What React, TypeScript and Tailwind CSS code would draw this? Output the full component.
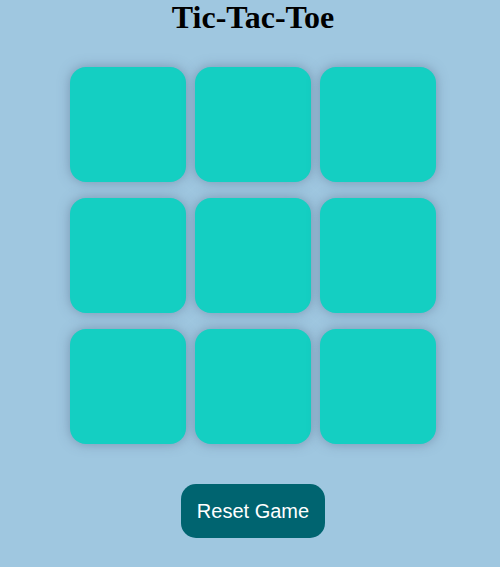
import React, { useState } from 'react';

export default function App() {
  const [board, setBoard] = useState<string[]>(Array(9).fill(''));

  return (
    <div className="min-h-[567px] w-full bg-[#9fc7e0] flex flex-col items-center pl-[6px]">
      <h1 className="mt-[1px] text-[32px] leading-[32px] font-bold text-black font-['Liberation_Serif',serif]">
        Tic-Tac-Toe
      </h1>
      <div className="mt-[34px] grid grid-cols-[116px_116px_116px] gap-x-[9px] gap-y-[16px]">
        {board.map((v, i) => (
          <div
            key={i}
            onClick={() => setBoard(b => b.map((c, j) => (j === i && !c ? 'X' : c)))}
            className="w-[116px] h-[115px] rounded-[16px] bg-[#14cfc2] shadow-[0_0_12px_rgba(80,100,130,0.5)] flex items-center justify-center text-5xl font-bold text-white cursor-pointer"
          >
            {v}
          </div>
        ))}
      </div>
      <button
        onClick={() => setBoard(Array(9).fill(''))}
        className="mt-[40px] w-[144px] h-[54px] rounded-[15px] bg-[#006470] text-white text-[20px] font-['Liberation_Sans',sans-serif]"
      >
        Reset Game
      </button>
    </div>
  );
}
